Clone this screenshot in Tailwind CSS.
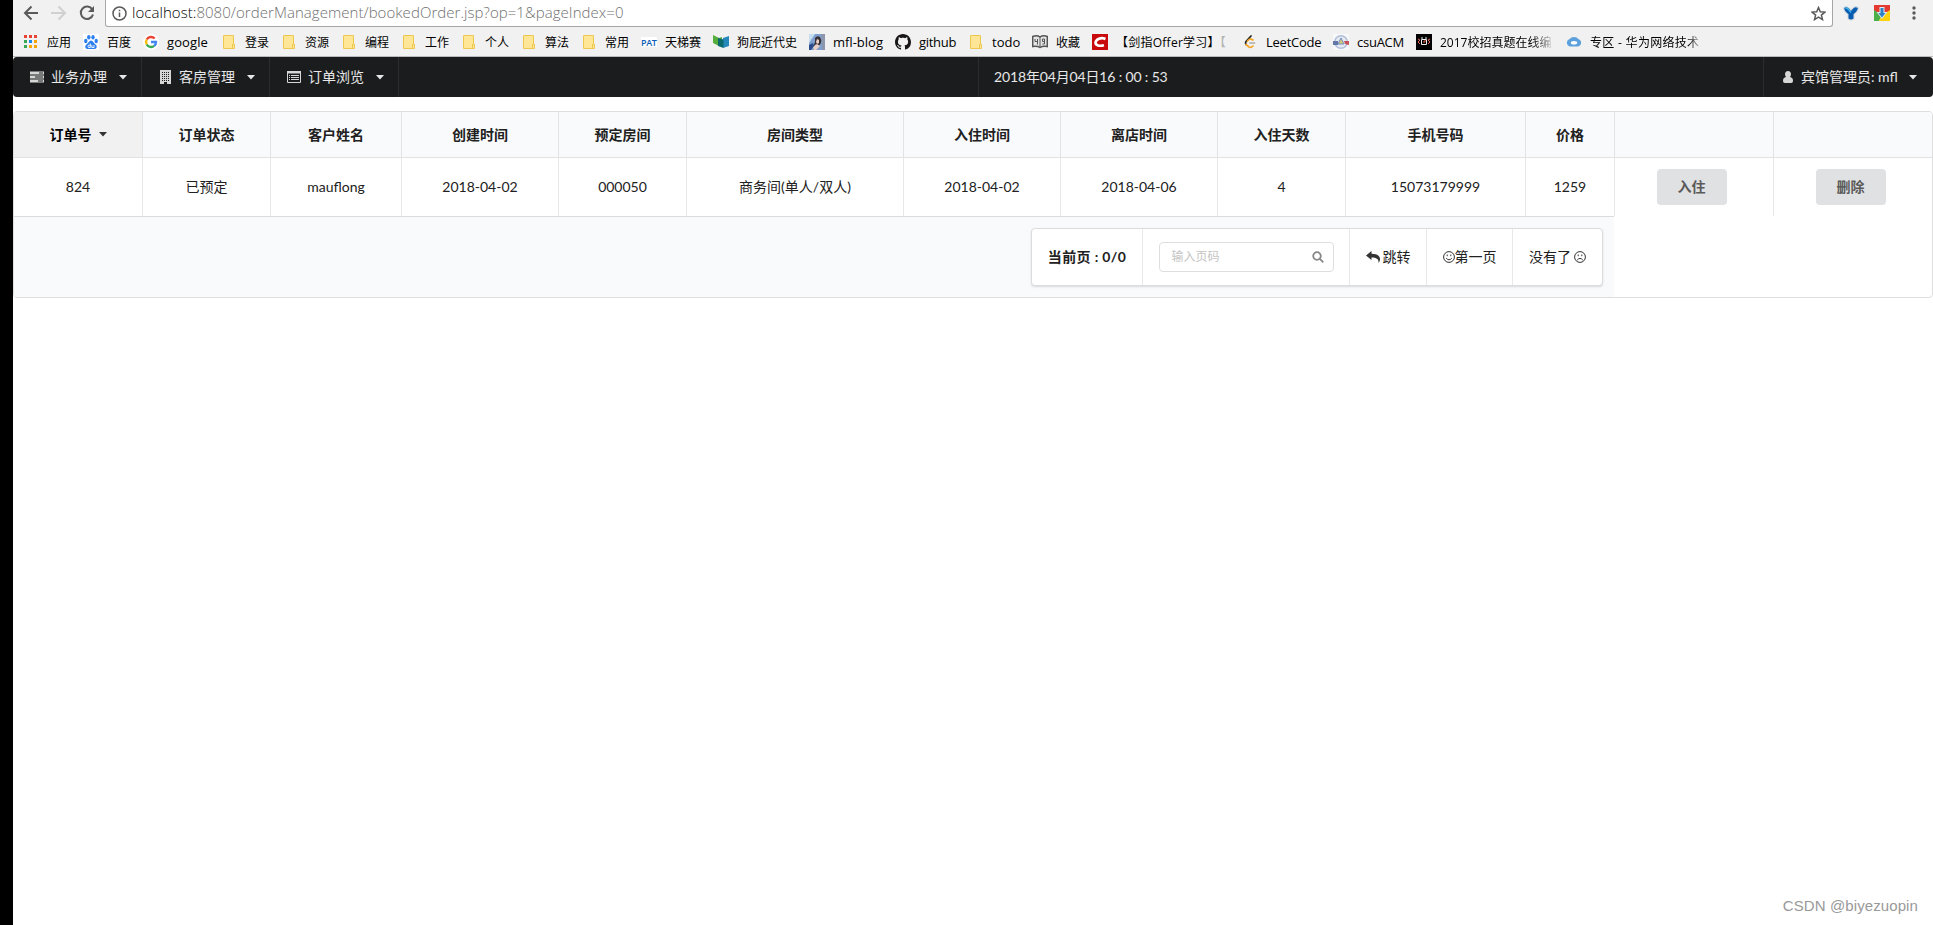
<!DOCTYPE html>
<html lang="zh-CN">
<head>
<meta charset="utf-8">
<title>bookedOrder</title>
<script src="https://cdn.jsdelivr.net/npm/@tailwindcss/browser@4"></script>
</head>
<body class="flex h-[925px] w-[1933px] overflow-hidden bg-white font-['Lato','Noto_Sans_CJK_SC',sans-serif] text-sm text-[#212121]">
<svg class="hidden">
  <symbol id="folder" viewBox="0 0 16 16"><path d="M2.5 1.5h10v9h1v4h-11z" fill="#ffe596" stroke="#ecc850"/><path d="M11.5 14v-3.5h2" fill="none" stroke="#ecc850"/></symbol>
  <symbol id="caret" viewBox="0 0 8 5"><path d="M0 0h8L4 4.5z" fill="currentColor"/></symbol>
</svg>
<div class="w-[13px] shrink-0 bg-black"></div>
<div class="w-[1920px] shrink-0">

  <!-- browser toolbar -->
  <header class="h-[57px] border-b border-[#b9bab9] bg-[#f1f1f1] font-['Open_Sans','Noto_Sans_CJK_SC',sans-serif] text-black">
    <div class="flex h-[27px]">
      <div class="flex h-[26px] w-[92px] shrink-0 items-center gap-3 pl-2.5 text-[#5a5a5a]">
        <svg class="size-4" viewBox="0 0 16 16" fill="none" stroke="currentColor" stroke-width="2"><path d="M15 8H2.5M8.5 1.5L2 8l6.500 6.500"/></svg>
        <svg class="size-4 text-[#d0d0d0]" viewBox="0 0 16 16" fill="none" stroke="currentColor" stroke-width="2"><path d="M0 8h13.500M7.500 1.500L14 8l-6.500 6.500"/></svg>
        <svg class="size-4" viewBox="0 0 16 16" fill="none" stroke="currentColor" stroke-width="2"><path d="M13.300 4.500A6.200 6.200 0 1 0 14 9.500"/><path d="M15 1v6H9z" fill="currentColor" stroke="none"/></svg>
      </div>
      <div class="flex w-[1728px] shrink-0 items-center rounded-b-[3px] border border-t-0 border-[#a6a6a6] bg-white pl-[6px]">
        <svg class="mr-[5px] size-[15px]" viewBox="0 0 15 15" fill="none" stroke="#5a5a5a" stroke-width="1.500"><circle cx="7.500" cy="7.500" r="6.500"/><path d="M7.500 6.500V11M7.500 3.700v1.600"/></svg>
        <span class="w-[1679px] text-[15px] font-light tracking-[0.05px] whitespace-nowrap text-[#707070]"><span class="text-black">localhost:</span>8080/orderManagement/bookedOrder.jsp?op=1&amp;pageIndex=0</span>
        <svg class="size-[15px]" viewBox="0 0 15 15" fill="none" stroke="#5a5a5a" stroke-width="1.500"><path d="M7.500 1.500l1.800 4.200 4.600.400-3.500 3 1.100 4.500-4-2.400-4 2.400 1.100-4.500-3.500-3 4.600-.400z"/></svg>
      </div>
      <div class="flex h-[26px] items-center pl-2.5">
        <svg class="size-4" viewBox="0 0 16 16"><path d="M0 2.500Q3 0 5.500 2L8 4l2.500-2Q13 0 16 2.500q0 4-4.500 7V14q-3.500 3-7 0V9.500Q0 6.500 0 2.500z" fill="#cfdae3"/><path d="M1.200 3q2.800-2 4.800.7L8 6l2-2.300Q12 1 14.800 3q-.5 3.500-4.300 6v4.500q-2.500 1.800-5 0V9Q1.700 6.500 1.200 3z" fill="#0a5cae"/><path d="M2.500 3.500q1.800-.8 3 1.200L8 7.500" stroke="#38b5f2" stroke-width="1.300" fill="none"/></svg>
        <svg class="ml-[15px] size-4" viewBox="0 0 16 16"><path d="M0 0h16v8H0z" fill="#e43a32"/><path d="M0 5l8 5-3 6H0z" fill="#4cb04a"/><path d="M16 5l-8 5-3 6h11z" fill="#fdd20a"/><path d="M5.500 2h5v5h3L8 14 2.500 7h3z" fill="#dceaf6"/><path d="M6.500 3h3v5h2L8 12.500 4.500 8h2z" fill="#2e7fc4"/></svg>
        <svg class="ml-[22px] h-4 w-1" viewBox="0 0 4 16" fill="#5a5a5a"><circle cx="2" cy="3" r="1.700"/><circle cx="2" cy="8" r="1.700"/><circle cx="2" cy="13" r="1.700"/></svg>
      </div>
    </div>
    <!-- bookmarks -->
    <nav class="flex h-[30px] pl-2.5 text-xs whitespace-nowrap [&_span]:pt-px [&>div]:flex [&>div]:shrink-0 [&>div]:items-center [&>div]:gap-2 [&_svg]:size-4 [&_svg]:shrink-0">
      <div class="w-[60px]"><svg viewBox="0 0 16 16"><path d="M1 1h3v3H1zM6 1h3v3H6zM11 1h3v3h-3z" fill="#ea4335"/><path d="M1 6h3v3H1zM1 11h3v3H1z" fill="#34a853"/><path d="M6 6h3v3H6z" fill="#1a88e8"/><path d="M11 6h3v3h-3zM6 11h3v3H6zM11 11h3v3h-3z" fill="#f5a50a"/></svg><span>应用</span></div>
      <div class="w-[60px]"><svg viewBox="0 0 16 16"><path d="M0 0h16v16H0z" fill="#fff"/><g fill="#2f80ef"><ellipse cx="2.800" cy="7" rx="1.700" ry="2.200"/><ellipse cx="5.800" cy="3.300" rx="1.700" ry="2.200"/><ellipse cx="10" cy="3.300" rx="1.700" ry="2.200"/><ellipse cx="13.200" cy="7" rx="1.700" ry="2.200"/><path d="M8 6.500c2 0 2.500 2.500 4.500 4s1.500 4.500-1 4.500H4.500c-2.500 0-3-3-1-4.500S6 6.500 8 6.500z"/></g><path d="M7.300 9.500v4H5.500q-1-1.200 0-2.300h1.800M8.800 11v2.500h2.200V11" fill="none" stroke="#fff" stroke-width=".9"/></svg><span>百度</span></div>
      <div class="w-[78px]"><svg viewBox="0 0 16 16" fill="none" stroke-width="2.400"><circle cx="8" cy="8" r="8" fill="#fff"/><path d="M3.700 5.500A5 5 0 0 1 11.700 4.500" stroke="#ea4335"/><path d="M3.700 5.500a5 5 0 0 0 0 5" stroke="#fbbc05"/><path d="M3.700 10.500a5 5 0 0 0 7.500 1.400" stroke="#34a853"/><path d="M11.200 11.900A5 5 0 0 0 13 8H8" stroke="#4285f4"/></svg><span class="text-[13px] tracking-[0.1px]">google</span></div>
      <div class="w-[60px]"><svg><use href="#folder"/></svg><span>登录</span></div>
      <div class="w-[60px]"><svg><use href="#folder"/></svg><span>资源</span></div>
      <div class="w-[60px]"><svg><use href="#folder"/></svg><span>编程</span></div>
      <div class="w-[60px]"><svg><use href="#folder"/></svg><span>工作</span></div>
      <div class="w-[60px]"><svg><use href="#folder"/></svg><span>个人</span></div>
      <div class="w-[60px]"><svg><use href="#folder"/></svg><span>算法</span></div>
      <div class="w-[60px]"><svg><use href="#folder"/></svg><span>常用</span></div>
      <div class="w-[72px]"><span class="w-4 bg-white text-[9px] leading-[9px] font-semibold tracking-[-0.4px] text-[#0a5cb8]">PAT</span><span>天梯赛</span></div>
      <div class="w-24"><svg viewBox="0 0 16 16"><path d="M0 1l6 3 3-1v8l-3 1-6-3z" fill="#55ad3c"/><path d="M10 4l6-2v10l-6 2z" fill="#2688b8"/><path d="M5 4l5.500 1.500V14L5 12z" fill="#0c6a6c"/></svg><span>狗屁近代史</span></div>
      <div class="w-[86px]"><svg viewBox="0 0 16 16"><path d="M0 0h16v16H0z" fill="#7fa0cf"/><path d="M0 0h6L0 9z" fill="#c6deee"/><path d="M12 0h4v16h-3z" fill="#8c97ad"/><path d="M6 4q2-3 5-1 2 3 1 6l-3 4-2-3-3 3 2-5z" fill="#3a3038"/><path d="M8 5l2 1v3l-2 1-1-2zM4 13l4-3 3 2-4 4H5z" fill="#eccfc4"/><path d="M0 11l4-2 1 3-3 4H0z" fill="#2b4b8b"/></svg><span class="text-[13px]">mfl-blog</span></div>
      <div class="w-[73px]"><svg viewBox="0 0 16 16"><path fill="#181616" d="M8 0C3.580 0 0 3.580 0 8c0 3.540 2.290 6.530 5.470 7.590.400.070.550-.170.550-.380 0-.190-.010-.820-.010-1.490-2.010.370-2.530-.490-2.690-.940-.090-.230-.480-.940-.820-1.130-.280-.150-.680-.520-.010-.530.630-.010 1.080.580 1.230.820.720 1.210 1.870.870 2.330.660.070-.520.280-.870.510-1.070-1.780-.200-3.640-.890-3.640-3.950 0-.870.310-1.590.820-2.150-.080-.200-.360-1.020.080-2.120 0 0 .670-.210 2.200.820.640-.180 1.320-.270 2-.270s1.360.090 2 .270c1.530-1.040 2.200-.820 2.200-.820.440 1.100.160 1.920.080 2.120.510.560.820 1.270.820 2.150 0 3.070-1.870 3.750-3.650 3.950.290.250.540.730.540 1.480 0 1.070-.010 1.930-.010 2.200 0 .210.150.460.550.380A8.010 8.010 0 0 0 16 8c0-4.420-3.580-8-8-8z"/></svg><span class="text-[13px] tracking-[-0.3px]">github</span></div>
      <div class="w-16"><svg><use href="#folder"/></svg><span class="text-[13px]">todo</span></div>
      <div class="w-[60px]"><svg viewBox="0 0 16 16" fill="none" stroke="#555"><path d="M.7 2.500Q5 1 8 3q3-2 7.300-.5v10Q11 11.500 8 13.500 5 11.500.7 12.500z" fill="#e4e4e4" stroke-width="1.500"/><path d="M8 3v10M5.500 5v5.500M3 5v2.500h2.500M10.500 5h2v2.500h-2zM10.500 10h2V7"/></svg><span>收藏</span></div>
      <div class="w-[150px]"><svg viewBox="0 0 16 16"><path d="M0 0h16v16H0z" fill="#c80a0d"/><path d="M13.500 5C9 3 4 5 3.500 8.500c0 3 4 4 8.500 2.800" fill="none" stroke="#fff" stroke-width="2.600"/></svg><span class="tracking-[0.25px]">【剑指Offer学习】<span class="text-[#b5b5b5]">【</span></span></div>
      <div class="w-[91px]"><svg viewBox="0 0 16 16" fill="none" stroke-linecap="round" stroke-width="1.700"><path d="M9 2L4 7.500q-1 1.500 0 3" stroke="#222"/><path d="M11 6Q8 4 5.500 7M4 10.500L7 13q2 1 4-1" stroke="#f3a526"/><path d="M8 9h4.500" stroke="#aaa"/></svg><span class="text-[13px] tracking-[-0.25px]">LeetCode</span></div>
      <div class="w-[83px]"><svg viewBox="0 0 16 16"><path d="M0 0h16v16H0z" fill="#f8f8f8"/><circle cx="8" cy="8" r="6.300" fill="#e6e9ef" stroke="#b0bedb" stroke-width="1.500"/><path d="M0 7h5v4H0z" fill="#6378a8"/><path d="M11 7h5v4l-4-1z" fill="#c7515a"/><path d="M8 4l3 6H5z" fill="#d8c676" stroke="#6e90c4"/></svg><span class="text-[13px] tracking-[-0.25px]">csuACM</span></div>
      <div class="w-[150px]"><svg viewBox="0 0 16 16"><path d="M0 0h16v16H0z"/><g fill="none"><path d="M2 5l2 1-2 2 2 2M14 5l-2 1 2 2-2 2" stroke="#e36757"/><path d="M5.500 5.500h5v5h-5zM6 3v2M10 3v2" stroke="#eee"/><path d="M8 9V7h2" stroke="#f06a4d"/></g></svg><span class="bg-linear-to-r from-black from-80% to-[#c8c8c8] bg-clip-text text-transparent">2017校招真题在线编</span></div>
      <div class="w-[150px]"><svg viewBox="0 0 16 16"><path d="M4 12.500a3.800 3.800 0 0 1-.6-7.300Q5 3 8 3t4.600 2.200a3.800 3.800 0 0 1-.6 7.300z" fill="#5ca1dc"/><ellipse cx="8" cy="8.700" rx="3.200" ry="1.800" fill="#fff"/></svg><span class="w-[112px] bg-linear-to-r from-black from-85% to-[#d8d8d8] bg-clip-text tracking-[0.3px] text-transparent">专区 - 华为网络技术</span></div>
    </nav>
  </header>

  <!-- main menu -->
  <nav class="flex h-10 items-stretch rounded bg-[#1b1c1d] whitespace-nowrap text-white/90">
    <div class="flex w-[129px] items-center border-r border-white/8 pl-[17px]">
      <svg class="mr-[7px] h-3 w-3.5" viewBox="0 0 14 12" fill="#d6d6d6"><path d="M0 .5h14v3H0zM0 4.500h14v3H0zM0 8.500h14v3H0z"/><path d="M9 1.500h4v1H9zM5 5.500h8v1H5zM8 9.500h5v1H8z" fill="#1b1c1d"/></svg>
      <span class="w-[68px]">业务办理</span><svg class="h-[5px] w-2"><use href="#caret"/></svg>
    </div>
    <div class="flex w-32 items-center border-r border-white/8 pl-[18px]">
      <svg class="mr-2 h-3.5 w-[11px]" viewBox="0 0 11 14"><path d="M0 0h11v14H7v-2H4v2H0z" fill="#d6d6d6"/><path d="M2.500 2v9M4.500 2v9M6.500 2v9M8.500 2v9" stroke="#1b1c1d" stroke-dasharray="1 1"/></svg>
      <span class="w-[68px]">客房管理</span><svg class="h-[5px] w-2"><use href="#caret"/></svg>
    </div>
    <div class="flex w-[129px] items-center border-r border-white/8 pl-[17px]">
      <svg class="mr-[7px] h-3 w-3.5" viewBox="0 0 14 12"><path d="M.5 1h13v10.500H.5z" fill="none" stroke="#d6d6d6"/><path d="M0 0h14v2.500H0zM2 4h1v1H2zM4 4h8v1H4zM2 6h1v1H2zM4 6h8v1H4zM2 8h1v1H2zM4 8h8v1H4z" fill="#d6d6d6"/></svg>
      <span class="w-[68px]">订单浏览</span><svg class="h-[5px] w-2"><use href="#caret"/></svg>
    </div>
    <div class="ml-[579px] flex items-center border-l border-white/8 pl-[15px] tracking-[-0.15px]">2018年04月04日16 : 00 : 53</div>
    <div class="ml-auto flex w-[170px] items-center border-l border-white/8 pl-[19px]">
      <svg class="mr-2 h-3 w-2.5" viewBox="0 0 10 12" fill="#d6d6d6"><path d="M5 0c2 0 3 1.500 3 3.300 0 1-.4 2-1 2.700C9 6.300 10 7.500 10 10c0 1.200-.8 2-1.800 2H1.800C.8 12 0 11.200 0 10c0-2.500 1-3.700 3-4-.6-.7-1-1.700-1-2.700C2 1.500 3 0 5 0z"/></svg>
      <span class="w-[108px]">宾馆管理员: mfl</span><svg class="h-[5px] w-2"><use href="#caret"/></svg>
    </div>
  </nav>

  <!-- orders -->
  <main class="mt-3.5 h-[187px]">
    <div class="h-full overflow-hidden rounded border border-[#dededf]">
      <div class="grid h-[46px] grid-cols-[128px_128px_131px_157px_128px_217px_157px_157px_128px_180px_89px_159px_159px] border-b border-[#e1e2e3] bg-[#f9fafb] font-bold [&>div]:flex [&>div]:items-center [&>div]:justify-center [&>div+div]:border-l [&>div+div]:border-[#e2e3e4]">
        <div class="bg-[#f1f1f1] text-black">订单号<svg class="ml-[7px] h-[5px] w-2 text-[#333]"><use href="#caret"/></svg></div><div>订单状态</div><div>客户姓名</div><div>创建时间</div><div>预定房间</div><div>房间类型</div><div>入住时间</div><div>离店时间</div><div>入住天数</div><div>手机号码</div><div>价格</div><div></div><div></div>
      </div>
      <div class="grid h-[58px] grid-cols-[128px_128px_131px_157px_128px_217px_157px_157px_128px_180px_89px_159px_159px] [&>div]:flex [&>div]:items-center [&>div]:justify-center [&>div+div]:border-l [&>div+div]:border-[#e7e7e8]">
        <div>824</div><div>已预定</div><div>mauflong</div><div>2018-04-02</div><div>000050</div><div>商务间(单人/双人)</div><div>2018-04-02</div><div>2018-04-06</div><div>4</div><div>15073179999</div><div>1259</div>
        <div class="pr-[5px]"><button class="h-9 w-[70px] rounded bg-[#e0e1e2] font-bold text-[#5a5a5a]">入住</button></div>
        <div class="pr-[5px]"><button class="h-9 w-[70px] rounded bg-[#e0e1e2] font-bold text-[#5a5a5a]">删除</button></div>
      </div>
      <div class="flex h-[81px] w-[1600px] justify-end border-t border-[#dadbdc] bg-[#f9fafb] pt-[11px] pr-[11px]">
        <div class="flex h-[58px] w-[572px] rounded border border-[#dcddde] bg-white whitespace-nowrap shadow-[0_1px_2px_0_rgba(34,36,38,.15)] [&>div]:flex [&>div]:items-center [&>div]:justify-center [&>div+div]:border-l [&>div+div]:border-[#e8e8e9]">
          <div class="w-[110px] font-bold tracking-[0.35px]">当前页 : 0/0</div>
          <div class="w-[207px]">
            <div class="flex h-[30px] w-[175px] items-center justify-between rounded border border-[#dededf] pr-[9px] pl-3 text-xs text-[#c4c4c4]"><span>输入页码</span><svg class="size-3" viewBox="0 0 12 12" fill="none" stroke="#888" stroke-width="1.800"><circle cx="5" cy="5" r="3.800"/><path d="M7.800 7.800l3.500 3.500"/></svg></div>
          </div>
          <div class="w-[77px]"><svg class="mr-[3px] h-3 w-3.5" viewBox="0 0 14 12"><path d="M0 4.500L5.500 0v2.700c5 0 8.500 1.800 8.500 5.300 0 1.500-.7 3-1.500 4 .5-3.500-1.500-5.500-7-5.500V9z" fill="#333"/></svg>跳转</div>
          <div class="w-[86px]"><svg class="size-3" viewBox="0 0 12 12" fill="none" stroke="#333"><circle cx="6" cy="6" r="5.400"/><path d="M3.200 7.200q2.800 3.200 5.600 0M4.200 3.500v1.700M7.800 3.500v1.700"/></svg>第一页</div>
          <div class="grow"><span>没有了</span><svg class="ml-[3px] size-3" viewBox="0 0 12 12" fill="none" stroke="#333"><circle cx="6" cy="6" r="5.400"/><path d="M3.200 9q2.800-3.200 5.600 0M4.200 3.500v1.700M7.800 3.500v1.700"/></svg></div>
        </div>
      </div>
    </div>
  </main>
  <footer class="flex h-[627px] items-end justify-end pr-[15px] pb-[9px] font-['Liberation_Sans',sans-serif] text-[15px] leading-5 tracking-[0.1px] text-[#999]">CSDN @biyezuopin</footer>
</div>
</body>
</html>
